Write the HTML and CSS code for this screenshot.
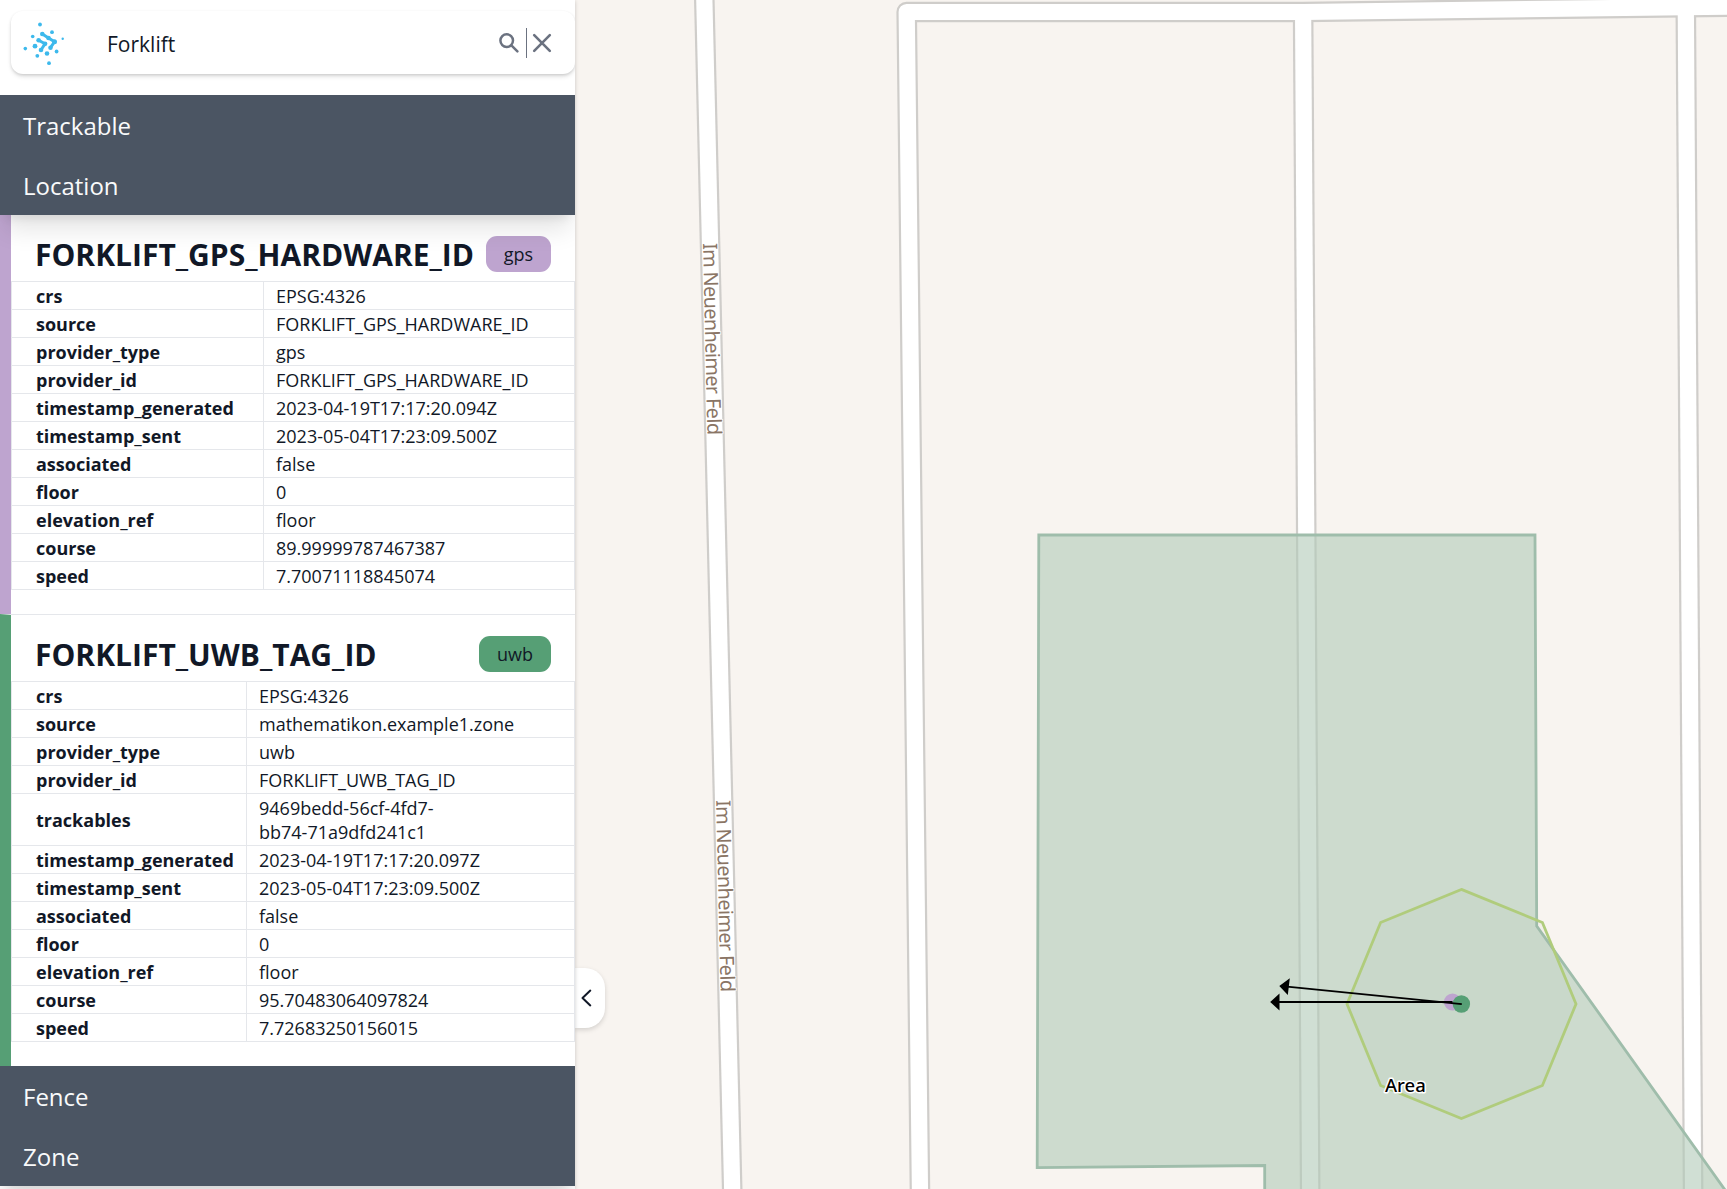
FILE: index.html
```html
<!DOCTYPE html>
<html lang="en">
<head>
<meta charset="utf-8">
<title>Forklift</title>
<link rel="stylesheet" href="styles.css">
</head>
<body>
<div class="app">
  <aside class="sidebar">
    <div class="search">
      <svg class="logo" width="44" height="44" viewBox="22 22 44 44" fill="#3db9ec" stroke="#3db9ec">
        <g stroke="none">
          <circle cx="40" cy="24.5" r="1.9"/><circle cx="52" cy="32.2" r="1.9"/><circle cx="32.7" cy="36.5" r="1.8"/>
          <circle cx="62.7" cy="38.8" r="1.2"/><circle cx="25.3" cy="48.6" r="1.8"/><circle cx="35" cy="46.2" r="2.4"/>
          <circle cx="56.6" cy="51.5" r="1.9"/><circle cx="47" cy="53.5" r="2.3"/><circle cx="37.3" cy="55.8" r="1.9"/>
          <circle cx="49" cy="63.2" r="1.9"/>
          <circle cx="42.3" cy="34" r="2.3"/><circle cx="48.5" cy="38" r="2.3"/><circle cx="54.5" cy="41.8" r="2.5"/>
          <circle cx="50.5" cy="47.7" r="2.3"/><circle cx="38.6" cy="40.2" r="2.3"/><circle cx="45" cy="43.8" r="2.4"/>
          <circle cx="41" cy="50" r="2.3"/>
        </g>
        <path d="M42.3 34 48.5 38 54.5 41.8 50.5 47.7M38.6 40.2 45 43.8 41 50" fill="none" stroke-width="3"/>
      </svg>
      <span class="query">Forklift</span>
      <svg class="find" width="20" height="20" viewBox="0 0 20 20" fill="none" stroke="#6b7280" stroke-width="2.5" stroke-linecap="round"><circle cx="7.7" cy="7.6" r="6.3"/><path d="M12.4 12.3 18.4 18.3"/></svg>
      <span class="rule"></span>
      <svg class="clear" width="20" height="20" viewBox="0 0 20 20" fill="none" stroke="#6b7280" stroke-width="2.6" stroke-linecap="round"><path d="M2.2 2.2 17.8 17.8M17.8 2.2 2.2 17.8"/></svg>
    </div>

    <div class="heading">Trackable</div>
    <div class="heading">Location</div>

    <section class="item gps">
      <header class="item-head"><h2>FORKLIFT_GPS_HARDWARE_ID</h2><span class="badge">gps</span></header>
      <table>
        <tr><th>crs</th><td>EPSG:4326</td></tr>
        <tr><th>source</th><td>FORKLIFT_GPS_HARDWARE_ID</td></tr>
        <tr><th>provider_type</th><td>gps</td></tr>
        <tr><th>provider_id</th><td>FORKLIFT_GPS_HARDWARE_ID</td></tr>
        <tr><th>timestamp_generated</th><td>2023-04-19T17:17:20.094Z</td></tr>
        <tr><th>timestamp_sent</th><td>2023-05-04T17:23:09.500Z</td></tr>
        <tr><th>associated</th><td>false</td></tr>
        <tr><th>floor</th><td>0</td></tr>
        <tr><th>elevation_ref</th><td>floor</td></tr>
        <tr><th>course</th><td>89.99999787467387</td></tr>
        <tr><th>speed</th><td>7.70071118845074</td></tr>
      </table>
    </section>

    <section class="item uwb">
      <header class="item-head"><h2>FORKLIFT_UWB_TAG_ID</h2><span class="badge">uwb</span></header>
      <table>
        <tr><th>crs</th><td>EPSG:4326</td></tr>
        <tr><th>source</th><td>mathematikon.example1.zone</td></tr>
        <tr><th>provider_type</th><td>uwb</td></tr>
        <tr><th>provider_id</th><td>FORKLIFT_UWB_TAG_ID</td></tr>
        <tr><th>trackables</th><td>9469bedd-56cf-4fd7-<br>bb74-71a9dfd241c1</td></tr>
        <tr><th>timestamp_generated</th><td>2023-04-19T17:17:20.097Z</td></tr>
        <tr><th>timestamp_sent</th><td>2023-05-04T17:23:09.500Z</td></tr>
        <tr><th>associated</th><td>false</td></tr>
        <tr><th>floor</th><td>0</td></tr>
        <tr><th>elevation_ref</th><td>floor</td></tr>
        <tr><th>course</th><td>95.70483064097824</td></tr>
        <tr><th>speed</th><td>7.72683250156015</td></tr>
      </table>
    </section>

    <div class="heading">Fence</div>
    <div class="heading">Zone</div>
  </aside>

  <main class="map">
    <svg class="canvas" width="1152" height="1189" viewBox="575 0 1152 1189">
      <g class="casing">
        <path d="M704.2-5 732.3 1194"/>
        <path d="M920 1194 906.7 12H1303L1684 7.2 1740 6.5"/>
        <path d="M1303.1 12 1310.2 1194"/>
        <path d="M1685.8 7 1693.1 1194"/>
      </g>
      <g class="road">
        <path d="M704.2-5 732.3 1194"/>
        <path d="M920 1194 906.7 12H1303L1684 7.2 1740 6.5"/>
        <path d="M1303.1 12 1310.2 1194"/>
        <path d="M1685.8 7 1693.1 1194"/>
      </g>
      <text class="street" transform="translate(703 243.2) rotate(88.66)" textLength="192">Im Neuenheimer Feld</text>
      <text class="street" transform="translate(716.2 800.2) rotate(88.66)" textLength="192">Im Neuenheimer Feld</text>

      <path class="zone" d="M1038.8 535H1535L1536.7 926 1731.5 1199H1264.7V1165.5L1037.2 1167.6Z"/>
      <path class="fence" d="M1461.4 889.4 1542.4 922.5 1576 1004 1542.4 1085.5 1461.4 1118.6 1380.6 1085.5 1347 1004 1380.6 922.5Z"/>
      <text class="area" x="1385" y="1092">Area</text>

      <circle cx="1452.5" cy="1002" r="8.6" fill="#bea4cf"/>
      <path class="arrow" d="M1452.5 1002H1278"/>
      <circle cx="1461.4" cy="1004" r="8.7" fill="#569f75"/>
      <path class="arrow" d="M1461.8 1004.2 1287 986.7"/>
      <path d="M1270.2 1002 1279.5 993.6V1010.4ZM1279.3 986 1289.8 978.2 1287.8 995Z"/>
    </svg>
    <button class="collapse" aria-label="Collapse"><svg width="12" height="18" viewBox="0 0 12 18" fill="none" stroke="#111827" stroke-width="2" stroke-linecap="round" stroke-linejoin="round"><path d="M9.3 1.6 1.5 9 9.3 16.4"/></svg></button>
  </main>
</div>
</body>
</html>
```
FILE: styles.css
```css
* { box-sizing: border-box; }
body { margin: 0; font-family: "Open Sans", "Noto Sans", sans-serif; color: #111827; overflow: hidden; }
.app { display: flex; width: 1727px; height: 1189px; }

.sidebar { width: 575px; height: 1189px; flex: none; background: #fff; position: relative; z-index: 1; overflow: hidden; box-shadow: 0 1px 4px rgba(0,0,0,.2); }
.search { display: flex; align-items: center; height: 63px; margin: 11px 0 21px 11px; padding: 0 23px 0 11px; border-radius: 12px; box-shadow: 0 3px 5px -1px rgba(0,0,0,.15), 0 1px 3px rgba(0,0,0,.1); }
.logo { flex: none; margin-top: 3px; }
.query { flex: 1; padding: 2px 0 0 41px; font-size: 21px; }
.find { margin: 0 7px 0 0; }
.rule { width: 1px; height: 30px; margin-right: 5px; background: #6b7280; }

.heading { height: 60px; padding-left: 23px; line-height: 62px; font-size: 24px; color: #f9fafb; background: #4b5563; box-shadow: 0 20px 25px -5px rgba(0,0,0,.1), 0 8px 10px -6px rgba(0,0,0,.1); position: relative; }

.item { border-left: 11px solid; padding-bottom: 24px; }
.item + .item { border-top: 1px solid #e5e7eb; }
.gps { border-left-color: #bea4cf; }
.uwb { border-left-color: #569f75; }
.item-head { display: flex; align-items: center; justify-content: space-between; height: 66px; padding: 12px 24px 0; }
.item-head h2 { margin: 0; font-size: 30px; line-height: 38px; padding-top: 2px; font-weight: 700; }
.badge { height: 36px; padding: 0 18px; border-radius: 11px; font-size: 18px; line-height: 36px; }
.gps .badge { background: #bea4cf; }
.uwb .badge { background: #569f75; }

table { width: 564px; border-collapse: collapse; table-layout: fixed; font-size: 18px; line-height: 24px; }
th, td { border: 1px solid #e5e7eb; padding: 1.5px 12px; text-align: left; }
th { width: 252px; padding-left: 24px; font-weight: 700; }
.uwb th { width: 235px; }

.map { position: relative; flex: 1; background: #f8f4f0; }
.canvas { display: block; }
.casing, .road { fill: none; stroke-linejoin: round; }
.casing { stroke: #cfcdca; stroke-width: 20.6px; }
.road { stroke: #fff; stroke-width: 16.2px; }
.street, .area { font-family: "Noto Sans", sans-serif; paint-order: stroke; stroke: #fff; }
.street { font-size: 19.8px; fill: #8a7565; stroke-width: 1.5px; }
.area { font-size: 18.5px; font-weight: 500; fill: #000; stroke-width: 3px; stroke-linejoin: round; }
.zone { fill: rgba(176,202,183,.6); stroke: #9fbdab; stroke-width: 2.8px; }
.fence { fill: rgba(150,170,160,.06); stroke: #b0cc7c; stroke-width: 2.8px; }
.arrow { stroke: #000; stroke-width: 1.8px; }

.collapse { position: absolute; left: 0; top: 968px; width: 30px; height: 60px; padding: 0 0 0 6px; display: flex; align-items: center; border: 0; border-radius: 0 20px 20px 0; background: #fff; box-shadow: 0 2px 5px rgba(0,0,0,.15); }
```
